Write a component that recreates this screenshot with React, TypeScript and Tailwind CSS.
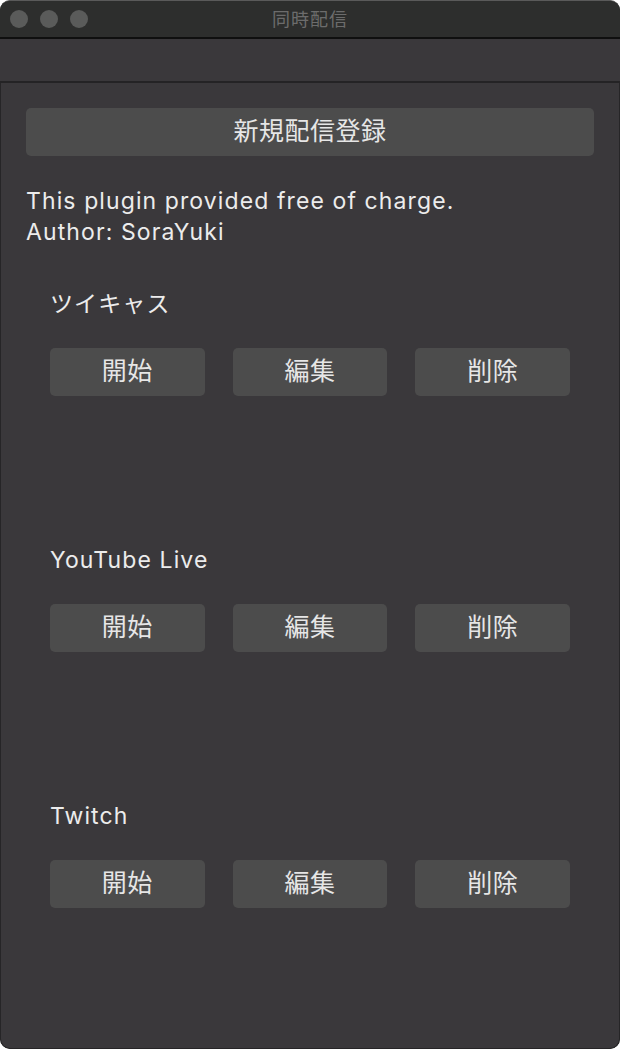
import React from 'react';

const latin = { fontFamily: 'Inter, "Noto Sans CJK JP", sans-serif' };

const services = ['ツイキャス', 'YouTube Live', 'Twitch'];
const actions = ['開始', '編集', '削除'];

function ActionButton({ label, className = '' }: { label: string; className?: string }) {
  return (
    <button
      className={`flex items-center justify-center rounded-[5px] bg-[#4c4c4c] text-[25px] tracking-[0.5px] text-[#e6e6e6] ${className}`}
    >
      {label}
    </button>
  );
}

export default function App() {
  return (
    <div className="w-[620px] h-[1050px] bg-white" style={latin}>
      <div className="flex h-[1049px] flex-col overflow-hidden rounded-[10px] border-t border-[#5a5a5a] bg-[#2d2e2d]">
        {/* title bar */}
        <div className="relative flex h-[36px] items-center justify-center bg-[#2d2e2d]">
          <div className="absolute left-[10px] top-[9px] flex gap-[12px]">
            <span className="h-[18px] w-[18px] rounded-full bg-[#5a5b5a]" />
            <span className="h-[18px] w-[18px] rounded-full bg-[#5a5b5a]" />
            <span className="h-[18px] w-[18px] rounded-full bg-[#5a5b5a]" />
          </div>
          <span className="text-[18px] tracking-[1px] text-[#6c6c6c]">同時配信</span>
        </div>
        <div className="h-[2px] bg-[#0f0f0f]" />
        {/* toolbar */}
        <div className="h-[42px] bg-[#3a383b]" />
        <div className="h-[2px] bg-[#242325]" />
        {/* content */}
        <div className="flex-1 rounded-b-[10px] border-x border-b border-[#262527] bg-[#3a383b] px-[25px] pt-[25px]">
          <ActionButton label="新規配信登録" className="h-[48px] w-full" />
          <div className="mt-[30px] text-[23px] leading-[31px] tracking-[1.1px] text-[#ececec]">
            <p>This plugin provided free of charge.</p>
            <p>Author: SoraYuki</p>
          </div>
          <div className="mt-[41px] flex flex-col gap-[149px] px-[24px]">
            {services.map((name) => (
              <div key={name} className="flex flex-col">
                <div className="h-[30px] text-[23px] leading-[30px] tracking-[1.1px] text-[#ececec]">{name}</div>
                <div className="mt-[29px] grid grid-cols-3 gap-[28px]">
                  {actions.map((a) => (
                    <ActionButton key={a} label={a} className="h-[48px]" />
                  ))}
                </div>
              </div>
            ))}
          </div>
        </div>
      </div>
    </div>
  );
}
